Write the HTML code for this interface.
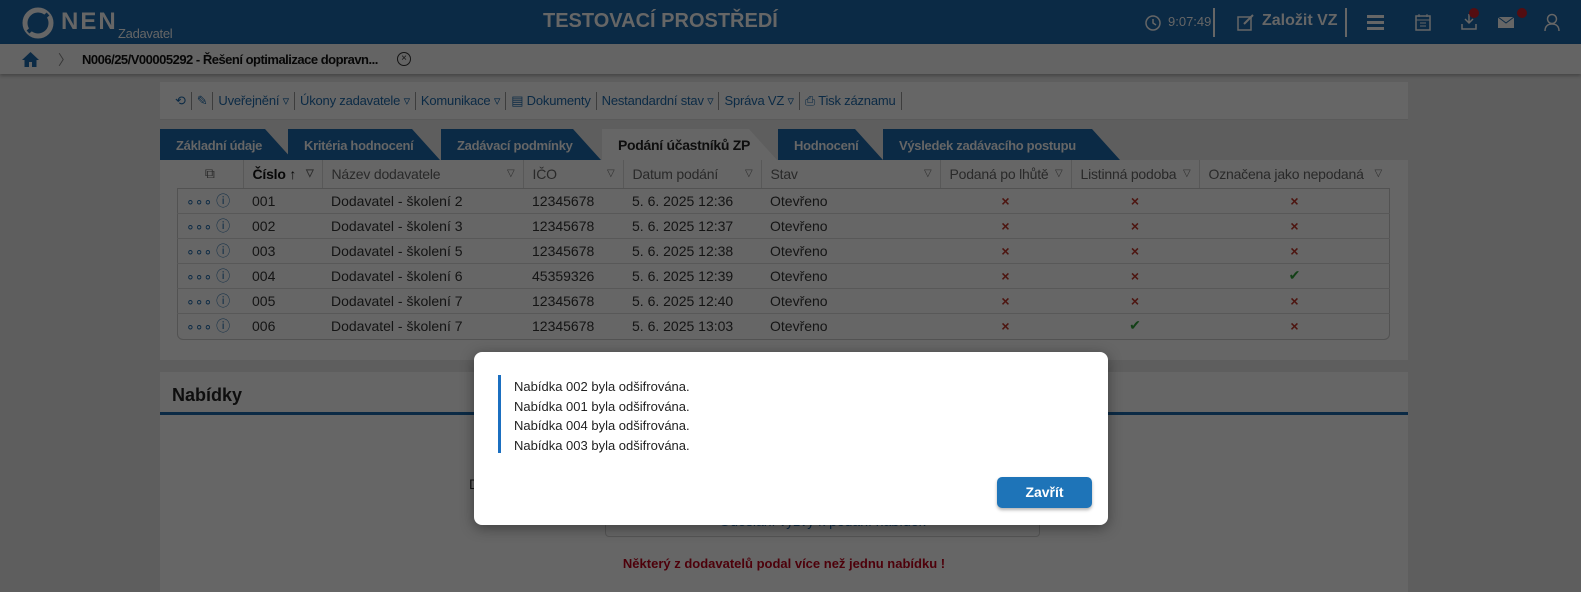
<!DOCTYPE html>
<html><head><meta charset="utf-8"><style>
*{box-sizing:border-box;margin:0;padding:0}
body{width:1581px;height:592px;overflow:hidden;background:#5e5e5e;font-family:"Liberation Sans",sans-serif;font-size:13px;color:#141414;position:relative}
.hdr{position:absolute;left:0;top:0;width:1581px;height:44px;background:#0b2a45;color:#666}
.bc{position:absolute;left:0;top:44px;width:1581px;height:30px;background:#646464;box-shadow:0 2px 3px rgba(0,0,0,.25)}
.abs{position:absolute}
.panel{position:absolute;background:#666;left:160px;width:1248px}
.tb{top:82px;height:38px;border-bottom:1px solid #5a5a5a;display:flex;align-items:center;padding-left:10px;color:#0b2a45;font-size:13px;letter-spacing:-0.2px}
.tb span{padding:0 5px;border-right:1px solid #3d3d3d;line-height:18px}
.tab{position:absolute;top:129px;height:31px;background:#0b2a45;color:#666;font-weight:bold;font-size:13px;letter-spacing:-0.3px;line-height:33px;padding-left:16px;clip-path:polygon(0 0,calc(100% - 28px) 0,100% 100%,0 100%);white-space:nowrap}
.tab.act{background:#666;color:#0e0e0e;font-size:14px}
table{border-collapse:collapse;position:absolute;left:177px;top:160px;width:1213px;font-size:14px;table-layout:fixed}
td{height:25px;border-bottom:1px solid #585858;padding-left:9px;white-space:nowrap;color:#141414}
th{height:28px;font-weight:normal;text-align:left;color:#292929;border-right:1px solid #585858;border-bottom:1px solid #525252;padding-left:9px;background:#666;position:relative;white-space:nowrap;letter-spacing:-0.2px}
th i{position:absolute;right:8px;top:8px;font-style:normal;font-size:10px;color:#2e2e2e}
.x{color:#4d1510;text-align:center;padding:0;font-weight:bold}
.ok{color:#134017;text-align:center;padding:0}
.ic{color:#0b2a45}
.modal{position:absolute;left:474px;top:352px;width:634px;height:173px;background:#fff;border-radius:8px;box-shadow:0 3px 14px rgba(0,0,0,.4)}
</style></head><body>
<div class="hdr">
 <svg class="abs" style="left:22px;top:7px" width="32" height="32" viewBox="0 0 32 32"><circle cx="16" cy="16" r="13" fill="none" stroke="#666" stroke-width="5"/><path d="M6 25 L26 7" stroke="#0b2a45" stroke-width="4"/></svg>
 <div class="abs" style="left:61px;top:8px;font-weight:bold;font-size:24px;letter-spacing:2px;color:#666">NEN</div>
 <div class="abs" style="left:118px;top:26px;font-size:13px;color:#666;letter-spacing:-0.3px">Zadavatel</div>
 <div class="abs" style="left:543px;top:10px;font-weight:bold;font-size:20px;color:#666">TESTOVACÍ PROSTŘEDÍ</div>
 <svg class="abs" style="left:1145px;top:15px" width="16" height="16"><circle cx="8" cy="8" r="7" fill="none" stroke="#666" stroke-width="1.5"/><path d="M8 4v4l3 2" stroke="#666" fill="none" stroke-width="1.5"/></svg>
 <div class="abs" style="left:1168px;top:14px;font-size:13px">9:07:49</div>
 <div class="abs" style="left:1213px;top:8px;width:2px;height:29px;background:#666"></div>
 <svg class="abs" style="left:1237px;top:13px" width="18" height="18"><rect x="1" y="4" width="13" height="13" fill="none" stroke="#666" stroke-width="1.5"/><path d="M7 11l9-9" stroke="#666" stroke-width="2"/></svg>
 <div class="abs" style="left:1262px;top:12px;font-weight:bold;font-size:16px">Založit VZ</div>
 <div class="abs" style="left:1345px;top:8px;width:2px;height:29px;background:#666"></div>
 <div class="abs" style="left:1367px;top:15px;width:17px;height:3px;background:#666;box-shadow:0 6px 0 #666,0 12px 0 #666"></div>
 <svg class="abs" style="left:1415px;top:13px" width="16" height="18"><rect x="1" y="3" width="14" height="14" fill="none" stroke="#666" stroke-width="1.5"/><path d="M1 7h14M5 10h6M5 13h6M4 1v3M12 1v3" stroke="#666"/></svg>
 <svg class="abs" style="left:1461px;top:13px" width="16" height="17"><path d="M8 1v9M4 6l4 4 4-4M1 11v5h14v-5" stroke="#666" fill="none" stroke-width="1.5"/></svg>
 <div class="abs" style="left:1469px;top:8px;width:10px;height:10px;border-radius:50%;background:#530d11"></div>
 <svg class="abs" style="left:1497px;top:16px" width="18" height="13"><rect x="1" y="1" width="16" height="11" fill="#666"/><path d="M1 1l8 6 8-6" stroke="#0b2a45" fill="none"/></svg>
 <div class="abs" style="left:1517px;top:8px;width:10px;height:10px;border-radius:50%;background:#530d11"></div>
 <svg class="abs" style="left:1544px;top:13px" width="16" height="18"><circle cx="8" cy="6" r="4.5" fill="none" stroke="#666" stroke-width="1.5"/><path d="M1 18c0-5 3-7 7-7s7 2 7 7" fill="none" stroke="#666" stroke-width="1.5"/></svg>
</div>
<div class="bc">
 <svg class="abs" style="left:22px;top:8px" width="17" height="15"><path d="M8.5 0L0 8h2.5v7h4.5v-5h3v5h4.5v-7h2.5z" fill="#0b2a45"/></svg>
 <div class="abs" style="left:58px;top:6px;color:#363636;font-size:14px">〉</div>
 <div class="abs" style="left:82px;top:8px;font-weight:bold;font-size:13px;letter-spacing:-0.5px;color:#070707">N006/25/V00005292 - Řešení optimalizace dopravn...</div>
 <div class="abs" style="left:397px;top:8px;width:14px;height:14px;border:1.3px solid #141414;border-radius:50%;font-size:10px;line-height:11px;text-align:center">×</div>
</div>
<div class="panel tb"><span>⟲</span><span>✎</span><span>Uveřejnění ▿</span><span>Úkony zadavatele ▿</span><span>Komunikace ▿</span><span>▤ Dokumenty</span><span>Nestandardní stav ▿</span><span>Správa VZ ▿</span><span>⎙ Tisk záznamu</span></div>
<div class="tab" style="left:160px;width:133px">Základní údaje</div>
<div class="tab" style="left:288px;width:152px">Kritéria hodnocení</div>
<div class="tab" style="left:441px;width:160px">Zadávací podmínky</div>
<div class="tab act" style="left:602px;width:175px">Podání účastníků ZP</div>
<div class="tab" style="left:778px;width:105px">Hodnocení</div>
<div class="tab" style="left:883px;width:237px">Výsledek zadávacího postupu</div>
<div class="panel" style="top:160px;height:200px"></div>
<div class="abs" style="left:177px;top:160px;width:1213px;height:180px;border:1.5px solid #525252;border-top:0;border-radius:0 0 6px 6px"></div>
<table>
<colgroup><col style="width:66px"><col style="width:79px"><col style="width:201px"><col style="width:100px"><col style="width:138px"><col style="width:179px"><col style="width:131px"><col style="width:128px"><col></colgroup>
<tr><th style="text-align:center;padding:0">⧉</th><th style="color:#070707;font-weight:bold">Číslo ↑<i>▽</i></th><th>Název dodavatele<i>▽</i></th><th>IČO<i>▽</i></th><th>Datum podání<i>▽</i></th><th>Stav<i>▽</i></th><th>Podaná po lhůtě<i>▽</i></th><th>Listinná podoba<i>▽</i></th><th style="border-right:0">Označena jako nepodaná<i>▽</i></th></tr>
<tr><td class="ic">∘∘∘ ⓘ</td><td>001</td><td>Dodavatel - školení 2</td><td>12345678</td><td>5. 6. 2025 12:36</td><td>Otevřeno</td><td class="x">×</td><td class="x">×</td><td class="x">×</td></tr>
<tr><td class="ic">∘∘∘ ⓘ</td><td>002</td><td>Dodavatel - školení 3</td><td>12345678</td><td>5. 6. 2025 12:37</td><td>Otevřeno</td><td class="x">×</td><td class="x">×</td><td class="x">×</td></tr>
<tr><td class="ic">∘∘∘ ⓘ</td><td>003</td><td>Dodavatel - školení 5</td><td>12345678</td><td>5. 6. 2025 12:38</td><td>Otevřeno</td><td class="x">×</td><td class="x">×</td><td class="x">×</td></tr>
<tr><td class="ic">∘∘∘ ⓘ</td><td>004</td><td>Dodavatel - školení 6</td><td>45359326</td><td>5. 6. 2025 12:39</td><td>Otevřeno</td><td class="x">×</td><td class="x">×</td><td class="ok">✔</td></tr>
<tr><td class="ic">∘∘∘ ⓘ</td><td>005</td><td>Dodavatel - školení 7</td><td>12345678</td><td>5. 6. 2025 12:40</td><td>Otevřeno</td><td class="x">×</td><td class="x">×</td><td class="x">×</td></tr>
<tr><td class="ic" style="border:0">∘∘∘ ⓘ</td><td style="border:0">006</td><td style="border:0">Dodavatel - školení 7</td><td style="border:0">12345678</td><td style="border:0">5. 6. 2025 13:03</td><td style="border:0">Otevřeno</td><td class="x" style="border:0">×</td><td class="ok" style="border:0">✔</td><td class="x" style="border:0">×</td></tr>
</table>
<div class="panel" style="top:372px;height:220px">
 <div class="abs" style="left:12px;top:13px;font-weight:bold;font-size:18px;color:#0e0e0e">Nabídky</div>
 <div class="abs" style="left:0;top:40px;width:1248px;height:3px;background:#0b2a45"></div>
 <div class="abs" style="left:309px;top:104px;font-size:14px">D</div>
 <div class="abs" style="left:445px;top:133px;width:435px;height:32px;border:1px solid #555;border-radius:4px;text-align:center;line-height:30px;color:#0b2a45;font-size:14px">Odeslání výzvy k podání nabídek</div>
 <div class="abs" style="left:0;top:184px;width:1248px;text-align:center;color:#4d000a;font-weight:bold;font-size:13px">Některý z dodavatelů podal více než jednu nabídku !</div>
</div>
<div class="modal">
 <div class="abs" style="left:24px;top:23px;width:3px;height:78px;background:#1b6fc0"></div>
 <div class="abs" style="left:40px;top:25px;font-size:13px;line-height:19.5px;color:#222">Nabídka 002 byla odšifrována.<br>Nabídka 001 byla odšifrována.<br>Nabídka 004 byla odšifrována.<br>Nabídka 003 byla odšifrována.</div>
 <div class="abs" style="left:523px;top:125px;width:95px;height:31px;background:#1e74b8;border-radius:5px;color:#fff;font-weight:bold;font-size:14px;text-align:center;line-height:31px;box-shadow:0 2px 3px rgba(0,0,0,.3)">Zavřít</div>
</div>
</body></html>
